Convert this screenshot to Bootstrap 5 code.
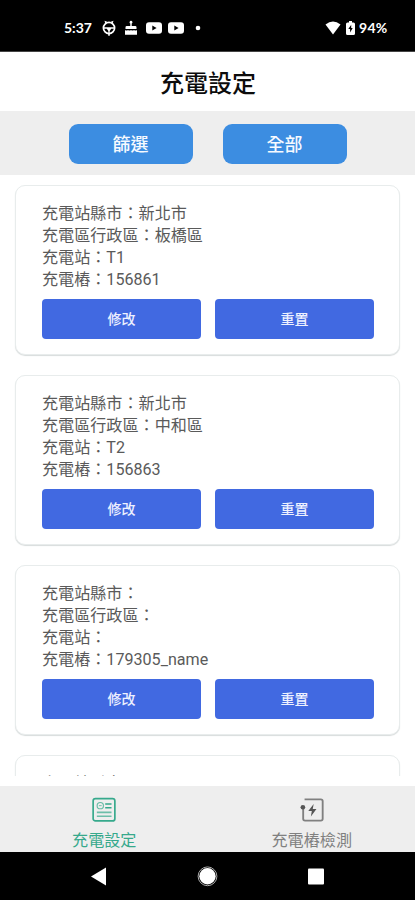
<!DOCTYPE html>
<html lang="zh-Hant">
<head>
<meta charset="utf-8">
<meta name="viewport" content="width=device-width, initial-scale=1">
<title>充電設定</title>
<link href="https://cdn.jsdelivr.net/npm/bootstrap@5.3.0/dist/css/bootstrap.min.css" rel="stylesheet">
<style>
body{font-family:Roboto,"Noto Sans CJK TC",sans-serif;font-size:16.1px;line-height:22px;color:#5a5a5a;background:#fff}
.screen{height:900px}
.status{height:52px;padding:4px 27px 0 64px;font:700 14px/20px Lato,sans-serif;border-bottom:1px solid #444}
.status svg{display:block;fill:#fff}
.clock{width:28px;margin-right:10px}
.second-video{margin-left:6px}
.more-dot{margin-left:11px}
.battery{margin-left:5px}
.percent{margin-left:4px;width:29px;letter-spacing:.3px}
.title-bar{height:59px;font-size:24px;line-height:36px;font-weight:500;color:#0c0c0c;padding:5px 0 0 1px}
.filters{height:64px;background:#eee;gap:30px;padding-top:2px}
.filters .btn{width:124px;height:40px;border-radius:9px;background:#3c8de1;color:#f6faff;font-size:18px;line-height:24px;font-weight:500;padding:2px 0 0;border:0}
.list{height:601px;padding:10px 15px 0}
.station{height:170px;border:1px solid #e8ecec;border-radius:10px;box-shadow:0 1px 1px #d8dcdc;padding:17px 25px 0 26px;margin-bottom:20px;flex-shrink:0;color:inherit}
.actions{gap:14px;margin-top:8px}
.actions .btn{height:40px;background:#4169e1;color:#eef1ff;border:0;border-radius:4px;font-size:14px;font-weight:500;padding:0}
.tabs{height:66px;margin-top:10px;background:#eee;color:#808080}
.tabs .tab-link{color:inherit;text-decoration:none;padding:11px 0 0 1px}
.tabs .tab-link.active{color:#36a98c}
.tabs svg{display:block;margin-bottom:7px}
.keys{height:48px}
</style>
<script src="https://cdn.jsdelivr.net/npm/bootstrap@5.3.0/dist/js/bootstrap.bundle.min.js"></script>
</head>
<body>
<div class="screen d-flex flex-column overflow-hidden">
  <div class="status bg-black text-white d-flex align-items-center flex-shrink-0">
    <span class="clock">5:37</span>
    <svg width="14" height="16" viewBox="0 0 14 16"><circle cx="7" cy="8" r="5.600" fill="none" stroke="#fff" stroke-width="1.700"/><path d="M2 7.200h10v1.500H9.200L7.700 11v3.700H6.300V11L4.800 8.700H2zM2.500 .8 5.200 1.800 3.300 3.600zM11.500 .8 8.800 1.800l1.900 1.800zM6.200 13h1.600v2.800H6.200z"/></svg>
    <svg class="ms-2" width="14" height="16" viewBox="0 0 14 16"><path d="M7 .8a1.500 1.500 0 0 1 .7 2.800V6h3.500q1.300 0 1.300 1.300V9H1.500V7.300Q1.500 6 2.800 6h3.500V3.600A1.500 1.500 0 0 1 7 .8zM1 10q1.500 1 3 0 1.500 1 3 0 1.500 1 3 0 1.500 1 3 0v4.700H1z"/></svg>
    <svg class="ms-2" width="16" height="16" viewBox="0 0 16 16"><path fill-rule="evenodd" d="M3 2.300h10q3 0 3 3v5.400q0 3-3 3H3q-3 0-3-3V5.300q0-3 3-3zM6.300 5.500v5l4.300-2.500z"/></svg>
    <svg class="second-video" width="16" height="16" viewBox="0 0 16 16"><path fill-rule="evenodd" d="M3 2.300h10q3 0 3 3v5.400q0 3-3 3H3q-3 0-3-3V5.300q0-3 3-3zM6.300 5.500v5l4.300-2.500z"/></svg>
    <svg class="more-dot" width="6" height="6" viewBox="0 0 6 6"><circle cx="3" cy="3" r="2.300"/></svg>
    <svg class="ms-auto" width="16" height="14" viewBox="0 0 16 14"><path d="M.5 3.500Q8-2.300 15.500 3.500L8 13.500z"/></svg>
    <svg class="battery" width="9" height="14" viewBox="0 0 9 14"><path fill-rule="evenodd" d="M3 0h3v1.500h1.500Q9 1.500 9 3v9.500q0 1.500-1.500 1.500h-6Q0 14 0 12.500V3q0-1.500 1.500-1.500H3zM5.200 3.800 2.300 8h1.800v3.500L6.700 7H5.200z"/></svg>
    <span class="percent">94%</span>
  </div>
  <header class="title-bar d-flex align-items-center justify-content-center flex-shrink-0">充電設定</header>
  <div class="filters d-flex align-items-center justify-content-center flex-shrink-0">
    <button class="btn">篩選</button>
    <button class="btn">全部</button>
  </div>
  <main class="list d-flex flex-column overflow-hidden flex-shrink-0">
    <div class="card station">
      <div>充電站縣市：新北市</div><div>充電區行政區：板橋區</div><div>充電站：T1</div><div>充電樁：156861</div>
      <div class="actions d-flex"><button class="btn flex-fill">修改</button><button class="btn flex-fill">重置</button></div>
    </div>
    <div class="card station">
      <div>充電站縣市：新北市</div><div>充電區行政區：中和區</div><div>充電站：T2</div><div>充電樁：156863</div>
      <div class="actions d-flex"><button class="btn flex-fill">修改</button><button class="btn flex-fill">重置</button></div>
    </div>
    <div class="card station">
      <div>充電站縣市：</div><div>充電區行政區：</div><div>充電站：</div><div>充電樁：179305_name</div>
      <div class="actions d-flex"><button class="btn flex-fill">修改</button><button class="btn flex-fill">重置</button></div>
    </div>
    <div class="card station">
      <div>充電站縣市：</div>
    </div>
  </main>
  <nav class="tabs d-flex flex-shrink-0">
    <a href="#" class="tab-link active w-50 d-flex flex-column align-items-center">
      <svg width="26" height="28" viewBox="0 0 26 28" fill="none" stroke="currentColor"><rect x="1.300" y="1.800" width="23.400" height="24" rx="2.500" stroke-width="1.800"/><circle cx="9" cy="9.300" r="3.400" stroke-width="1.200" opacity=".75"/><path d="M7.500 9.300h3" opacity=".7"/><path d="M14.300 7.500h6.800M14.300 11.500h6.800" stroke-width="1.700"/><path d="M5.300 16.500h15.800M5.300 20.700h15.800" stroke-width="1.800" opacity=".7"/></svg>
      充電設定</a>
    <a href="#" class="tab-link w-50 d-flex flex-column align-items-center">
      <svg width="26" height="28" viewBox="0 0 26 28" fill="none" stroke="currentColor"><path d="M5 2.500H22.500q2 0 2 2V23.500q0 2-2 2H5.500q-2 0-2-2V11" stroke-width="2"/><circle cx="3.200" cy="11" r="2.500" fill="#555" stroke="none"/><path d="M14.800 7.500 9 15h3.800L11.800 21l6-8.200h-4z" fill="#555" stroke="none"/></svg>
      充電樁檢測</a>
  </nav>
  <div class="keys bg-black flex-shrink-0">
    <svg class="d-block" width="415" height="48" viewBox="0 0 415 48" fill="#fff"><path d="M91 24.500 106 15.500v18z"/><circle cx="207.500" cy="24.300" r="9.400" fill="none" stroke="#aaa"/><circle cx="207.500" cy="24.300" r="8.200"/><rect x="308" y="16.500" width="16" height="16" rx="1"/></svg>
  </div>
</div>
</body>
</html>
